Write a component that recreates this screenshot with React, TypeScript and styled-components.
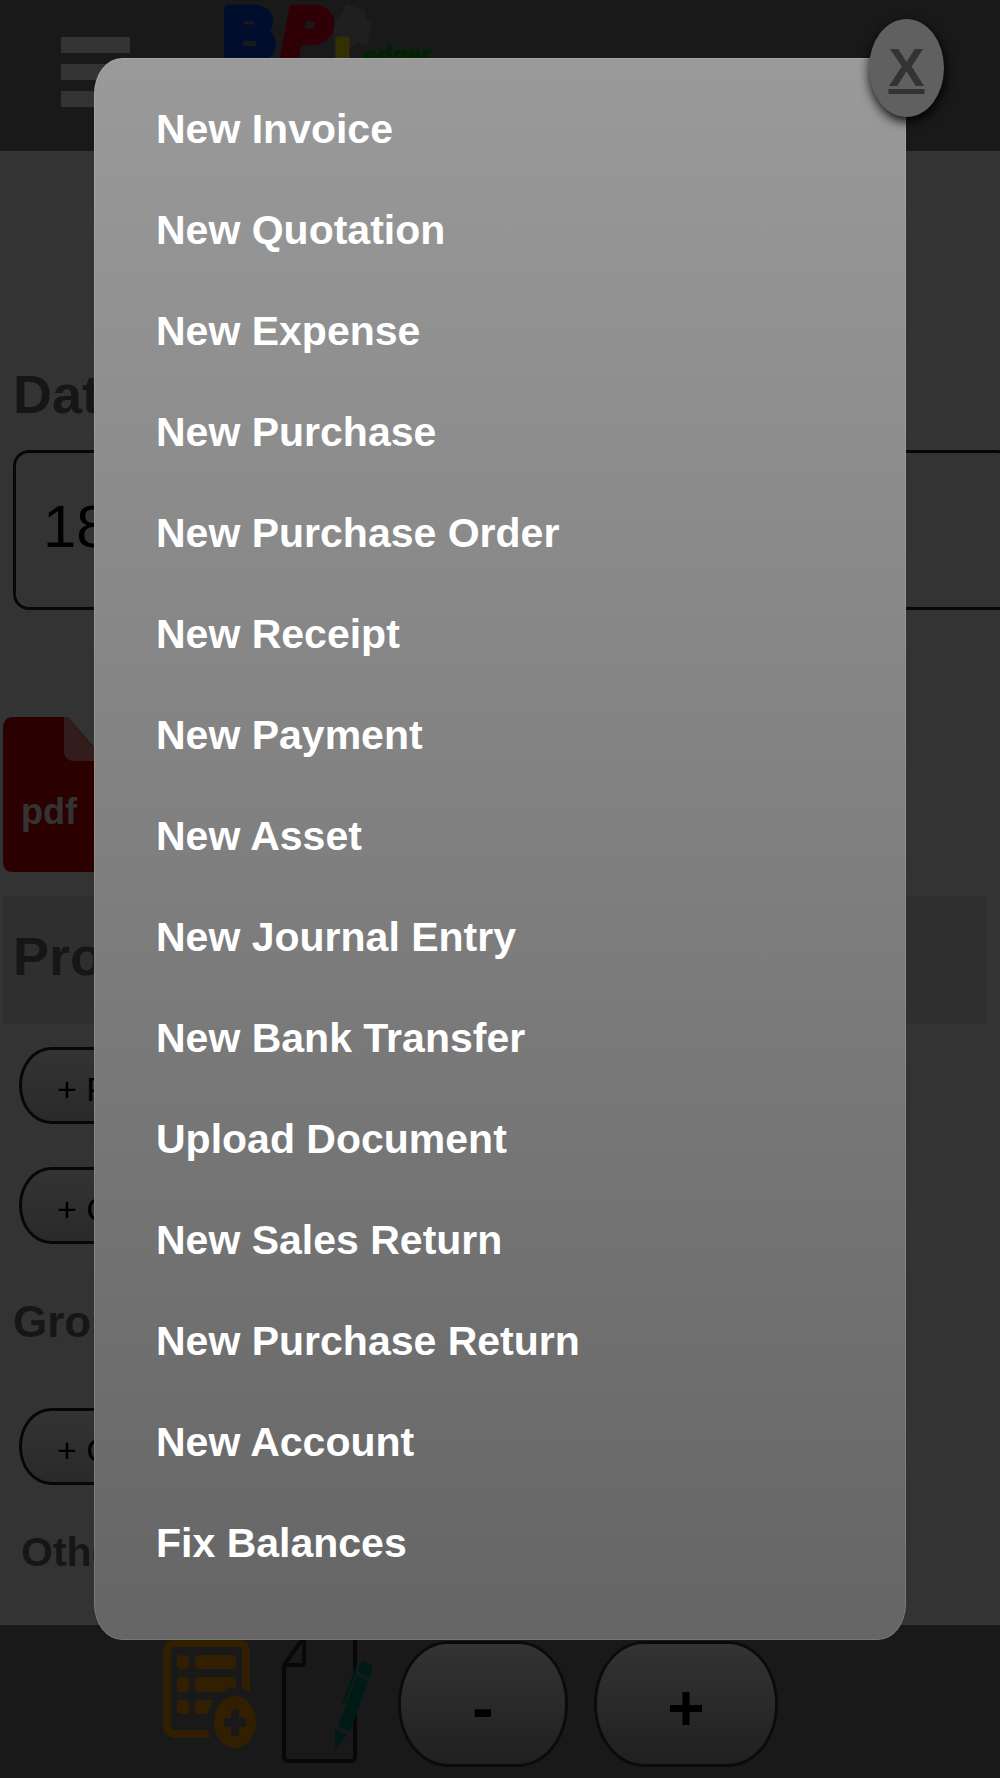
import React from "react";
import styled, { createGlobalStyle } from "styled-components";

const sans = `"Liberation Sans", Arial, sans-serif`;

const GlobalStyle = createGlobalStyle`
  *, *::before, *::after { box-sizing: border-box; }
  body { margin: 0; background: #fff; font-family: ${sans}; }
  button, input { font-family: inherit; }
`;

const Page = styled.div`
  position: relative;
  display: flex;
  flex-direction: column;
  min-height: 100vh;
  overflow: hidden;
`;

const Header = styled.header`
  display: flex;
  align-items: flex-start;
  gap: 90px;
  height: 151px;
  padding: 0 61px;
  background: #7d7d7d;
`;

const MenuButton = styled.button`
  display: flex;
  flex-direction: column;
  gap: 11px;
  width: 69px;
  margin-top: 37px;
  padding: 0;
  border: 0;
  background: none;
`;

const MenuBar = styled.span`
  display: block;
  height: 16px;
  background: #fff;
`;

const LogoArt = styled.svg`
  display: block;
  flex: none;
  font-family: ${sans};
  font-weight: 700;
`;

const Main = styled.main`
  display: flex;
  flex-direction: column;
  flex: 1;
  padding: 205px 0 16px;
`;

const Field = styled.div`
  display: flex;
  flex-direction: column;
  gap: 17px;
`;

const FieldLabel = styled.label`
  padding-left: 13px;
  color: #6e6e6e;
  font-size: 54px;
  font-weight: 700;
  line-height: 77px;
`;

const DateInput = styled.input`
  width: 100%;
  height: 160px;
  margin-left: 13px;
  padding: 0 27px 8px;
  border: 3px solid #262626;
  border-radius: 16px;
  background: #fff;
  color: #000;
  font-size: 60px;
`;

const PdfButton = styled.button`
  width: 122px;
  height: 155px;
  margin: 107px 0 24px 3px;
  padding: 0;
  border: 0;
  background: none;
`;

const SectionTitle = styled.h2`
  margin: 0 13px 23px 3px;
  padding: 0 10px 8px;
  background: #ececec;
  color: #6e6e6e;
  font-size: 54px;
  line-height: 120px;
`;

const Actions = styled.div`
  display: flex;
  flex-direction: column;
  align-items: flex-start;
  gap: 43px;
  padding-left: 19px;
`;

const PillButton = styled.button`
  height: 77px;
  padding: 8px 35px 0;
  border: 3px solid #262626;
  border-radius: 32px / 38px;
  background: linear-gradient(#fff, #cfcfcf);
  color: #000;
  font-size: 34px;
`;

const Summary = styled.p<{ $large?: boolean }>`
  margin: 0;
  padding: ${(p) => (p.$large ? "48px 13px 56px" : "37px 21px 0")};
  color: #6e6e6e;
  font-size: ${(p) => (p.$large ? 44 : 41)}px;
  font-weight: 700;
  line-height: 60px;
`;

const Footer = styled.footer`
  display: flex;
  align-items: flex-start;
  gap: 26px;
  height: 153px;
  padding: 9px 160px;
  background: #7d7d7d;
`;

const IconButton = styled.button`
  display: block;
  flex: none;
  padding: 0;
  border: 0;
  background: none;

  svg { display: block; }
`;

const StepButton = styled.button<{ $wide?: boolean }>`
  flex: none;
  width: ${(p) => (p.$wide ? 184 : 170)}px;
  height: 126px;
  margin-top: 7px;
  padding: 8px 0 0;
  border: 3px solid #383838;
  border-radius: 50px / 62px;
  background: linear-gradient(#fff, #a0a0a0);
  color: #000;
  font-size: 64px;
  font-weight: 700;
`;

const Overlay = styled.div`
  position: absolute;
  inset: 0;
  padding: 58px 9.4%;
  background: rgba(0, 0, 0, 0.8);
`;

const Dialog = styled.div`
  position: relative;
  padding: 21px 62px 46px;
  border-radius: 28px / 36px;
  background: linear-gradient(#9a9a9a, #656565);
  box-shadow: inset 0 0 0 1px rgba(255, 255, 255, 0.12);
`;

const CloseLink = styled.a`
  position: absolute;
  top: -39px;
  right: -38px;
  width: 75px;
  height: 98px;
  border-radius: 50%;
  background: #606060;
  box-shadow: 1px 4px 12px #000;
  color: #333;
  font-size: 54px;
  font-weight: 700;
  line-height: 96px;
  text-align: center;
  text-decoration: underline;
`;

const MenuList = styled.ul`
  margin: 0;
  padding: 0;
  list-style: none;
`;

const MenuLink = styled.a`
  display: block;
  color: #fff;
  font-size: 41px;
  font-weight: 700;
  line-height: 101px;
  text-decoration: none;
`;

const menuItems = [
  "New Invoice",
  "New Quotation",
  "New Expense",
  "New Purchase",
  "New Purchase Order",
  "New Receipt",
  "New Payment",
  "New Asset",
  "New Journal Entry",
  "New Bank Transfer",
  "Upload Document",
  "New Sales Return",
  "New Purchase Return",
  "New Account",
  "Fix Balances",
];

function Logo() {
  return (
    <LogoArt width="230" height="110" viewBox="0 0 230 110" aria-label="BPLedger" role="img">
      <path d="M127 4l18 7 1 8 6 5-5 22-9-4-9 6v30h-15V35l-2-11 9-8z" fill="#999" />
      <g strokeLinejoin="round">
        <text x="4" y="58" fontSize="70" fill="#0040e0" stroke="#0040e0" strokeWidth="9">B</text>
        <text x="63" y="58" fontSize="70" fontStyle="italic" fill="#e8001e" stroke="#e8001e" strokeWidth="9">P</text>
        <text x="116" y="72" fontSize="46" fill="#fff000" stroke="#fff000" strokeWidth="7">L</text>
      </g>
      <text x="143" y="64" fontSize="25" fill="#00a800" stroke="#00a800" strokeWidth="1">edger</text>
    </LogoArt>
  );
}

function PdfIcon() {
  return (
    <svg width="122" height="155" viewBox="0 0 122 155" aria-hidden="true">
      <path d="M10 0h55l57 66v79q0 10-9 10H10q-10 0-10-10V12Q0 0 10 0z" fill="#cf0000" />
      <path d="M61 0h4l37 44H71q-10 0-10-11z" fill="#ff8c8c" />
      <text x="18" y="107" fontSize="36" fontWeight="700" fill="#fff" fontFamily="Liberation Sans, Arial, sans-serif">pdf</text>
    </svg>
  );
}

function ListAddIcon() {
  return (
    <svg width="96" height="116" viewBox="0 0 96 116" aria-hidden="true">
      <rect x="7" y="9" width="79" height="91" rx="8" fill="none" stroke="#f59b00" strokeWidth="8" />
      <g fill="#f59b00">
        <rect x="17" y="21" width="12" height="14" rx="4" />
        <rect x="35" y="21" width="41" height="14" rx="4" />
        <rect x="17" y="43" width="12" height="15" rx="4" />
        <rect x="35" y="43" width="41" height="15" rx="4" />
        <rect x="17" y="66" width="12" height="14" rx="4" />
        <rect x="35" y="66" width="41" height="14" rx="4" />
      </g>
      <ellipse cx="75" cy="88" rx="28" ry="35" fill="#7d7d7d" />
      <ellipse cx="75" cy="88" rx="21" ry="26" fill="#f59b00" />
      <path d="M71 75h8v9h7v9h-7v9h-8v-9h-7v-9h7z" fill="#7d7d7d" />
    </svg>
  );
}

function DocumentPenIcon() {
  return (
    <svg width="90" height="130" viewBox="0 0 90 130" aria-hidden="true">
      <path d="M22 2h48q3 0 3 3v118q0 4-4 4H6q-4 0-4-4V31L22 3v25q0 3-3 3H2" fill="none" stroke="#2b2b2b" strokeWidth="4" />
      <path d="M78 25l11 8-21 55-16 18 2-25z" fill="#7d7d7d" />
      <g fill="#00806b">
        <path d="M78 29l3-2 9 5v6l-3 6-12-7z" />
        <path d="M75 41l11 6-18 51-12-5z" />
        <path d="M72 36l3 1-12 32-3 1z" />
        <path d="M53 95l12 6-12 14z" />
      </g>
    </svg>
  );
}

export default function App() {
  return (
    <>
      <GlobalStyle />
      <Page>
        <Header>
          <MenuButton aria-label="Menu">
            <MenuBar />
            <MenuBar />
            <MenuBar />
          </MenuButton>
          <Logo />
        </Header>
        <Main>
          <Field>
            <FieldLabel htmlFor="date">Date</FieldLabel>
            <DateInput id="date" type="text" defaultValue="18" />
          </Field>
          <PdfButton aria-label="pdf">
            <PdfIcon />
          </PdfButton>
          <SectionTitle>Pro</SectionTitle>
          <Actions>
            <PillButton>+ P</PillButton>
            <PillButton>+ C</PillButton>
          </Actions>
          <Summary $large>Gros</Summary>
          <Actions>
            <PillButton>+ C</PillButton>
          </Actions>
          <Summary>Othe</Summary>
        </Main>
        <Footer>
          <IconButton aria-label="Add to list">
            <ListAddIcon />
          </IconButton>
          <IconButton aria-label="Edit document">
            <DocumentPenIcon />
          </IconButton>
          <StepButton>-</StepButton>
          <StepButton $wide>+</StepButton>
        </Footer>
        <Overlay>
          <Dialog role="dialog" aria-modal="true" aria-label="Create new">
            <CloseLink href="#close">X</CloseLink>
            <MenuList>
              {menuItems.map((item) => (
                <li key={item}>
                  <MenuLink href="#">{item}</MenuLink>
                </li>
              ))}
            </MenuList>
          </Dialog>
        </Overlay>
      </Page>
    </>
  );
}
